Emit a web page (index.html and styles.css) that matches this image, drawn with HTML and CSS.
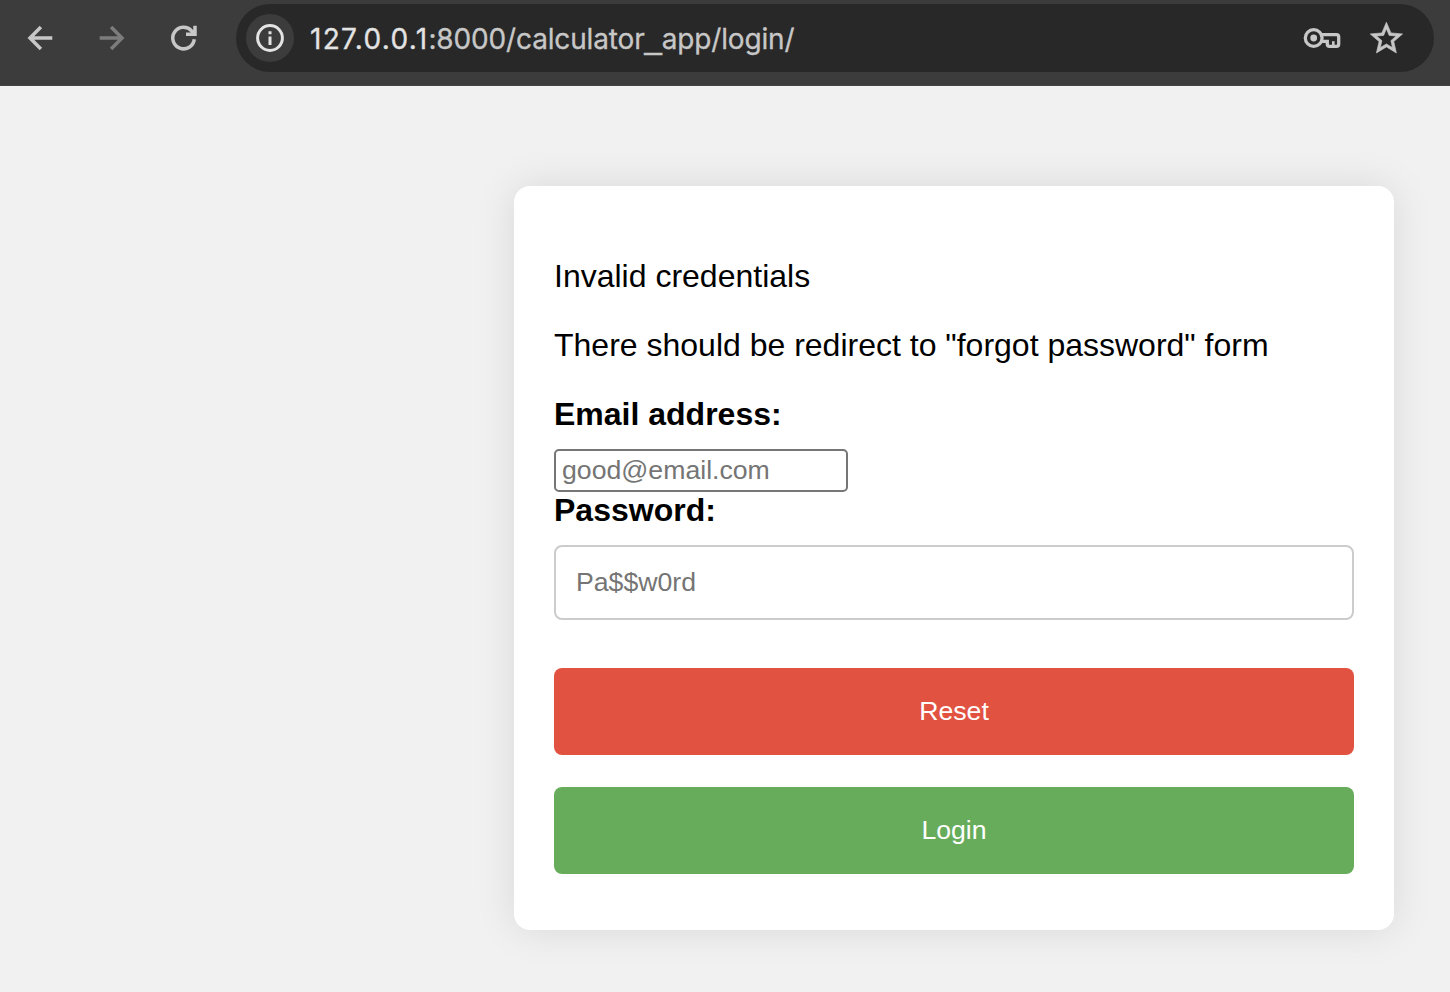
FILE: index.html
```html
<!DOCTYPE html>
<html lang="en">
<head>
<meta charset="utf-8">
<title>Login</title>
<link rel="stylesheet" href="styles.css">
</head>
<body>
<header class="toolbar">
  <nav class="nav">
    <svg class="nav-icon" viewBox="0 0 32 32"><path d="M28.3 16H6.5M16.9 5.1 6 16l10.9 10.9"/></svg>
    <svg class="nav-icon nav-icon-off" viewBox="0 0 32 32"><path d="M3.7 16H25.5M15.1 5.1 26 16 15.1 26.9"/></svg>
    <svg class="nav-icon" viewBox="0 0 32 32"><path d="M26.3 17.3A10.8 10.8 0 1 1 23.6 8.8L26.6 12M27 3.7V12.3H18"/></svg>
  </nav>
  <div class="omnibox">
    <span class="site-info">
      <svg class="info-icon" viewBox="0 0 28 28"><circle cx="14" cy="14" r="12.4"/><path d="M14 12.6V21M14 7.2v3.1"/></svg>
    </span>
    <span class="url"><span class="host">127.0.0.1</span><span class="path">:8000/calculator<span class="underscore">_</span>app/login/</span></span>
    <svg class="key-icon" viewBox="0 0 38 22"><path d="M18.2 7.7H33.5Q35.7 7.7 35.7 9.9V17Q35.7 19.3 33.5 19.3H26.5Q24.3 19.3 24.3 17V14.3H18.2"/><circle cx="10.7" cy="11" r="8.4"/><circle class="key-dot" cx="10.7" cy="11" r="3.4"/><path class="key-notch" d="M30.3 14.2V19"/></svg>
    <svg class="star-icon" viewBox="0 0 24 24"><path d="M22 9.24l-7.19-.62L12 2 9.19 8.63 2 9.24l5.46 4.73L5.82 21 12 17.27 18.18 21l-1.63-7.03L22 9.24zM12 15.4l-3.76 2.27 1-4.28-3.32-2.88 4.38-.38L12 6.1l1.71 4.04 4.38.38-3.32 2.88 1 4.28L12 15.4z"/></svg>
  </div>
</header>
<main class="page">
  <form class="card">
    <p class="message">Invalid credentials</p>
    <p class="message">There should be redirect to "forgot password" form</p>
    <label class="label" for="email">Email address:</label>
    <input class="email" id="email" type="email" placeholder="good@email.com">
    <label class="label" for="password">Password:</label>
    <input class="password" id="password" type="password" placeholder="Pa$$w0rd">
    <button class="button reset" type="reset">Reset</button>
    <button class="button login" type="submit">Login</button>
  </form>
</main>
</body>
</html>
```
FILE: styles.css
```css
* { box-sizing: border-box; }
body {
  margin: 0;
  height: 992px;
  overflow: hidden;
  background: #f1f1f1;
  color: #000;
  font: 32px/37px "Liberation Sans", Arial, sans-serif;
}
.toolbar {
  display: flex;
  height: 86px;
  padding: 4px 16px 0 24px;
  background: #3c3c3c;
  border-bottom: 1px solid #454344;
}
.nav { display: flex; gap: 40px; width: 212px; height: 68px; align-items: center; }
.nav-icon { width: 32px; height: 32px; fill: none; stroke: #c7c7c7; stroke-width: 3.5; }
.nav-icon-off { stroke: #7c7c7c; }
.omnibox {
  flex: 1;
  display: flex;
  align-items: center;
  height: 68px;
  padding: 0 28px 0 10px;
  border-radius: 34px;
  background: #282828;
}
.site-info {
  display: flex;
  align-items: center;
  justify-content: center;
  width: 48px;
  height: 48px;
  border-radius: 50%;
  background: #3c3c3c;
}
.info-icon { width: 28px; height: 28px; fill: none; stroke: #e3e3e3; stroke-width: 3; }
.url {
  flex: 1;
  margin-left: 16px;
  padding-top: 1px;
  font: 28px/36px Inter, sans-serif;
  white-space: nowrap;
  color: #c7c7c7;
  -webkit-text-stroke: .3px currentColor;
}
.host { color: #e3e3e3; letter-spacing: 1.33px; }
.path { letter-spacing: -.15px; }
.underscore { font-family: "Liberation Sans", Arial, sans-serif; font-size: 31px; line-height: 1; -webkit-text-stroke-width: .6px; }
.key-icon { width: 38px; height: 22px; margin-right: 26px; fill: none; stroke: #c7c7c7; stroke-width: 3.3; }
.key-dot { fill: #c7c7c7; stroke: none; }
.key-notch { stroke-width: 2.6; }
.star-icon { width: 38.8px; height: 38.8px; fill: #c7c7c7; stroke: #c7c7c7; stroke-width: .4; }
.page { padding: 100px 56px 0 514px; }
.card {
  display: flex;
  flex-direction: column;
  height: 744px;
  padding: 72px 40px 56px;
  border-radius: 16px;
  background: #fff;
  box-shadow: 0 0 40px rgba(0, 0, 0, .1);
}
.message { margin: 0 0 32px; }
.label { margin-bottom: 16px; font-weight: bold; }
.email, .password, .button { font: 26.667px/31px "Liberation Sans", Arial, sans-serif; }
.email {
  width: 294px;
  height: 43px;
  padding: 2px 6px;
  border: 2px solid #767676;
  border-radius: 5px;
}
.password {
  height: 75px;
  margin-bottom: 48px;
  padding: 20px;
  border: 2px solid #ccc;
  border-radius: 8px;
}
.email::placeholder, .password::placeholder { color: #757575; }
.button { height: 87px; padding: 0; border: 0; border-radius: 8px; color: #fff; }
.reset { margin-bottom: 32px; background: #e15241; }
.login { background: #67ac5b; }
```
